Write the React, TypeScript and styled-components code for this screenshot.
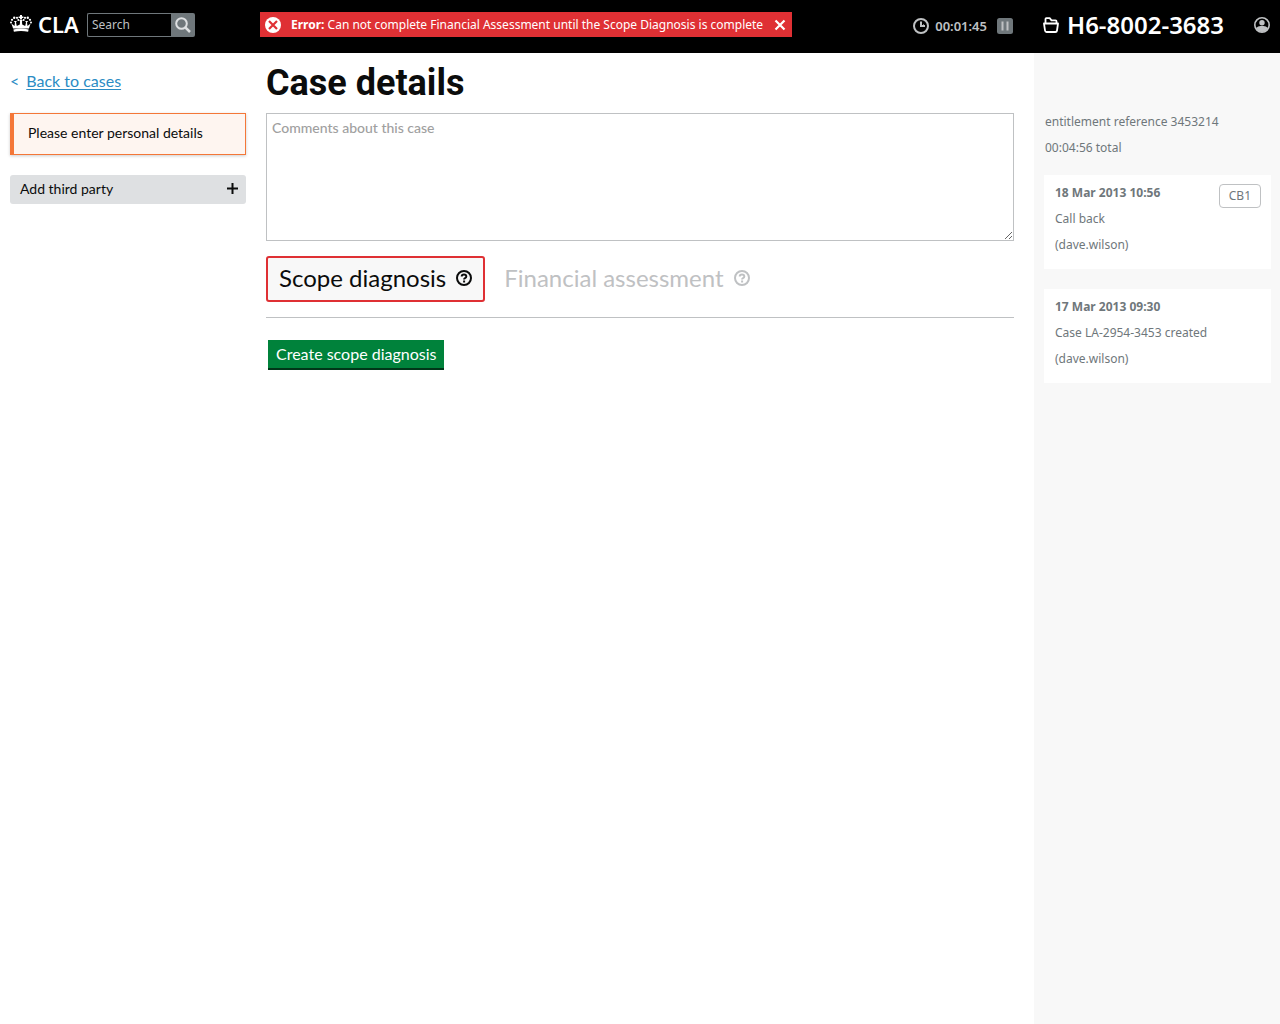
import React from "react";
import styled, { createGlobalStyle } from "styled-components";

const colors = {
  text: "#0b0c0c",
  muted: "#6f777b",
  border: "#bfc1c3",
  panel: "#f8f8f8",
  red: "#df3034",
  orange: "#f47738",
  link: "#2b8cc4",
  green: "#00823b",
};

const GlobalStyle = createGlobalStyle`
  *, *::before, *::after { box-sizing: border-box; }
  body {
    margin: 0;
    background: #fff;
    color: ${colors.text};
    font-family: Lato, "Liberation Sans", sans-serif;
    font-size: 14px;
    line-height: 20px;
  }
  h1, h2, p, ul { margin: 0; padding: 0; }
  button, input, textarea { font: inherit; }
  button { cursor: pointer; }
  svg { display: block; flex: none; }
`;

const Page = styled.div`
  min-height: 100vh;
  display: flex;
  flex-direction: column;
`;

const columns = "256px minmax(0, 1fr) 246px";

const Header = styled.header`
  display: grid;
  grid-template-columns: ${columns};
  height: 53px;
  padding-bottom: 4px;
  align-items: center;
  background: #000;
  color: #fff;
  font-family: "Noto Sans", "Open Sans", sans-serif;
`;

const Brand = styled.div`
  display: flex;
  align-items: center;
  padding-left: 10px;
`;

const Logo = styled.a`
  display: flex;
  align-items: center;
  gap: 6px;
  width: 77px;
  padding-bottom: 2px;
  color: #fff;
  font-size: 22px;
  font-weight: 600;
  line-height: 22px;
  text-decoration: none;
`;

const SearchForm = styled.form`
  display: flex;
  width: 108px;
  height: 24px;
`;

const SearchInput = styled.input`
  flex: 1;
  min-width: 0;
  padding: 0 4px;
  border: 1px solid ${colors.muted};
  border-right: 0;
  border-radius: 2px 0 0 2px;
  background: #000;
  color: #fff;
  font-size: 12px;
  &::placeholder { color: ${colors.border}; opacity: 1; }
`;

const SearchButton = styled.button`
  display: grid;
  place-items: center;
  width: 24px;
  padding: 0;
  border: 0;
  border-radius: 0 2px 2px 0;
  background: ${colors.muted};
  color: #dee0e2;
`;

const HeaderMain = styled.div`
  display: flex;
  align-items: center;
  justify-content: space-between;
  padding: 0 21px 0 4px;
`;

const IconButton = styled.button`
  display: grid;
  place-items: center;
  padding: 0;
  border: 0;
  background: none;
  color: inherit;
`;

const ErrorNotice = styled.div`
  display: flex;
  align-items: center;
  height: 25px;
  gap: 10px;
  padding: 0 5px;
  background: ${colors.red};
  font-size: 12px;
  white-space: nowrap;
  ${IconButton} { padding: 0 1px; }
`;

const Timer = styled.div`
  display: flex;
  align-items: center;
  gap: 6px;
  padding-top: 2px;
  color: ${colors.border};
  font-size: 13px;
  font-weight: 600;
  ${IconButton} { margin-left: 4px; }
`;

const CaseBar = styled.div`
  display: flex;
  align-items: center;
  justify-content: space-between;
  padding: 0 10px 0 9px;
`;

const CaseReference = styled.div`
  display: flex;
  align-items: center;
  gap: 8px;
  font-size: 24px;
  font-weight: 600;
  line-height: 24px;
  white-space: nowrap;
`;

const Body = styled.div`
  flex: 1;
  display: grid;
  grid-template-columns: ${columns};
`;

const Sidebar = styled.nav`
  display: flex;
  flex-direction: column;
  padding: 18px 10px;
`;

const BackRow = styled.div`
  display: flex;
  gap: 7px;
  margin-bottom: 22px;
  color: ${colors.link};
  font-size: 16px;
`;

const BackLink = styled.a`
  color: ${colors.link};
  text-decoration: underline;
  text-underline-offset: 2px;
`;

const PersonalDetails = styled.button`
  height: 42px;
  margin-bottom: 20px;
  padding: 0 14px 2px;
  border: 1px solid ${colors.orange};
  border-left-width: 4px;
  background: #fef5f0;
  box-shadow: 0 1px 3px rgba(0, 0, 0, 0.2);
  color: ${colors.text};
  text-align: left;
`;

const ThirdParty = styled.button`
  display: flex;
  align-items: center;
  justify-content: space-between;
  height: 29px;
  padding: 0 8px 2px 10px;
  border: 0;
  border-radius: 3px;
  background: #dee0e2;
  color: ${colors.text};
`;

const Main = styled.main`
  padding: 10px 20px 10px 10px;
`;

const Title = styled.h1`
  margin-bottom: 10px;
  font-family: Roboto, "Liberation Sans", sans-serif;
  font-size: 36px;
  font-weight: 700;
  line-height: 40px;
`;

const Comments = styled.textarea`
  display: block;
  width: 100%;
  height: 128px;
  padding: 4px 5px;
  border: 1px solid ${colors.border};
  border-radius: 0;
  font-size: 14px;
  line-height: 20px;
  resize: vertical;
  &::placeholder { color: #a0a0a0; opacity: 1; font-weight: 500; }
`;

const Tabs = styled.div`
  display: flex;
  gap: 6px;
  padding: 15px 0;
  border-bottom: 1px solid ${colors.border};
`;

const Tab = styled.button<{ $active?: boolean }>`
  display: flex;
  align-items: center;
  gap: 10px;
  height: 46px;
  padding: 0 11px 2px;
  border: 2px solid ${(p) => (p.$active ? colors.red : "transparent")};
  border-radius: 3px;
  background: ${(p) => (p.$active ? colors.panel : "transparent")};
  color: ${(p) => (p.$active ? colors.text : colors.border)};
  font-size: 24px;
  white-space: nowrap;
`;

const CreateButton = styled.button`
  height: 30px;
  margin: 22px 2px;
  padding: 0 8px 2px;
  border: 0;
  background: ${colors.green};
  box-shadow: inset 0 -2px 0 #003618;
  color: #fff;
  font-size: 16px;
`;

const Aside = styled.aside`
  padding: 56px 9px 0 10px;
  background: ${colors.panel};
  color: ${colors.muted};
  font-family: "Noto Sans", "Open Sans", sans-serif;
  font-size: 12px;
  line-height: 26px;
`;

const Summary = styled.div`
  padding-left: 1px;
  margin-bottom: 14px;
`;

const LogList = styled.ul`
  display: grid;
  gap: 20px;
  list-style: none;
`;

const LogEntry = styled.li`
  display: flex;
  justify-content: space-between;
  align-items: flex-start;
  padding: 5px 10px 11px 11px;
  background: #fff;
`;

const LogDate = styled.h2`
  font-size: 12px;
  font-weight: 700;
  line-height: 26px;
`;

const Code = styled.span`
  margin-top: 4px;
  padding: 0 9px;
  border: 1px solid ${colors.border};
  border-radius: 4px;
  line-height: 22px;
`;

const CrownIcon = () => (
  <svg width="22" height="18" viewBox="0 0 22 18" fill="currentColor" aria-hidden="true">
    <path d="M10 0h2v1.400h1.400v1.600H12v1.500h-2V3H8.600V1.400H10z" />
    <circle cx="4.200" cy="2.800" r="1.200" />
    <circle cx="7" cy="2.800" r="1.100" />
    <circle cx="15" cy="2.800" r="1.100" />
    <circle cx="17.800" cy="2.800" r="1.200" />
    <circle cx="2" cy="4.800" r="1.100" />
    <circle cx="20" cy="4.800" r="1.100" />
    <circle cx="1" cy="7.500" r="1" />
    <circle cx="21" cy="7.500" r="1" />
    <circle cx="8.300" cy="5" r="1" />
    <circle cx="13.700" cy="5" r="1" />
    <path d="M1.400 8.500 4.500 11 5 7.500 3.800 6h3L6 7.600l.8 3.300 3-1.500L10 6.500 9.300 5h3.400L12 6.500l.2 2.900 3 1.500.8-3.300L15.200 6h3L17 7.500l.5 3.500 3.100-2.500-1.700 5.100-15.800 0z" />
    <path d="M3.400 14.500q7.600-1.900 15.200 0l-.5 2.300q-7.100-1.600-14.200 0z" />
  </svg>
);

const SearchIcon = () => (
  <svg width="16" height="16" viewBox="0 0 16 16" fill="none" stroke="currentColor" strokeWidth="2" aria-hidden="true">
    <circle cx="6.500" cy="6.500" r="5.300" />
    <path d="m10.300 10.300 4.700 4.700" strokeWidth="2.500" />
  </svg>
);

const ErrorIcon = () => (
  <svg width="16" height="16" viewBox="0 0 16 16" aria-hidden="true">
    <circle cx="8" cy="8" r="8" fill="#fff" />
    <path d="m4 4 8 8m0-8-8 8" stroke={colors.red} strokeWidth="2.200" />
  </svg>
);

const CloseIcon = () => (
  <svg width="12" height="12" viewBox="0 0 12 12" aria-hidden="true">
    <path d="m1.500 1.500 9 9m0-9-9 9" stroke="currentColor" strokeWidth="2.200" />
  </svg>
);

const ClockIcon = () => (
  <svg width="16" height="16" viewBox="0 0 16 16" fill="none" stroke="currentColor" strokeWidth="2" aria-hidden="true">
    <circle cx="8" cy="8" r="7" />
    <path d="M8 3.500V8h4" />
    <path d="m8.500 8.500 2.500-2" strokeWidth="1" />
  </svg>
);

const PauseIcon = () => (
  <svg width="16" height="16" viewBox="0 0 16 16" aria-hidden="true">
    <rect width="16" height="16" rx="2.500" fill={colors.muted} />
    <path d="M5.500 3.500v9M10.500 3.500v9" stroke="currentColor" strokeWidth="2" />
  </svg>
);

const FolderIcon = () => (
  <svg width="16" height="16" viewBox="0 0 16 16" fill="none" stroke="currentColor" strokeWidth="1.800" strokeLinejoin="round" aria-hidden="true">
    <path d="M2.500 6.500V2Q2.500 1.200 3.300 1.200h3.400L8.500 3.300h4q1 0 1 1v2.200" />
    <path d="M1 6.500h14l-1 7q-.2 1.500-1.600 1.500H3.600Q2.200 15 2 13.500z" />
  </svg>
);

const UserIcon = () => (
  <svg width="16" height="16" viewBox="0 0 16 16" aria-hidden="true">
    <circle cx="8" cy="8" r="7.200" fill="none" stroke={colors.border} strokeWidth="1.600" />
    <circle cx="8" cy="5.700" r="2.700" fill={colors.border} />
    <path d="M2 11q2-2 4.500-2h3Q12 9 14 11q-2 4-6 4t-6-4z" fill={colors.border} />
  </svg>
);

const PlusIcon = () => (
  <svg width="11" height="11" viewBox="0 0 11 11" aria-hidden="true">
    <path d="M5.500 0v11M0 5.500h11" stroke="currentColor" strokeWidth="2" />
  </svg>
);

const HelpIcon = () => (
  <svg width="16" height="16" viewBox="0 0 16 16" fill="none" stroke="currentColor" strokeWidth="2" aria-hidden="true">
    <circle cx="8" cy="8" r="7" />
    <path d="M5.700 6.500Q5.700 4.500 8 4.500t2.300 1.900Q10.300 7.500 9 8.100 8.100 8.500 8.100 9.600" />
    <path d="M7.100 11.500h2" />
  </svg>
);

const logs = [
  { date: "18 Mar 2013 10:56", note: "Call back", user: "dave.wilson", code: "CB1" },
  { date: "17 Mar 2013 09:30", note: "Case LA-2954-3453 created", user: "dave.wilson" },
];

export default function App() {
  return (
    <>
      <GlobalStyle />
      <Page>
        <Header>
          <Brand>
            <Logo href="#">
              <CrownIcon />
              CLA
            </Logo>
            <SearchForm role="search">
              <SearchInput type="text" placeholder="Search" aria-label="Search" />
              <SearchButton type="submit" aria-label="Submit search">
                <SearchIcon />
              </SearchButton>
            </SearchForm>
          </Brand>
          <HeaderMain>
            <ErrorNotice role="alert">
              <ErrorIcon />
              <span>
                <strong>Error:</strong> Can not complete Financial Assessment until the Scope Diagnosis is complete
              </span>
              <IconButton type="button" aria-label="Dismiss">
                <CloseIcon />
              </IconButton>
            </ErrorNotice>
            <Timer>
              <ClockIcon />
              00:01:45
              <IconButton type="button" aria-label="Pause timer">
                <PauseIcon />
              </IconButton>
            </Timer>
          </HeaderMain>
          <CaseBar>
            <CaseReference>
              <FolderIcon />
              H6-8002-3683
            </CaseReference>
            <IconButton type="button" aria-label="Account">
              <UserIcon />
            </IconButton>
          </CaseBar>
        </Header>
        <Body>
          <Sidebar>
            <BackRow>
              <span>&lt;</span>
              <BackLink href="#">Back to cases</BackLink>
            </BackRow>
            <PersonalDetails type="button">Please enter personal details</PersonalDetails>
            <ThirdParty type="button">
              Add third party
              <PlusIcon />
            </ThirdParty>
          </Sidebar>
          <Main>
            <Title>Case details</Title>
            <Comments placeholder="Comments about this case" aria-label="Comments about this case" />
            <Tabs role="tablist">
              <Tab type="button" role="tab" aria-selected="true" $active>
                Scope diagnosis
                <HelpIcon />
              </Tab>
              <Tab type="button" role="tab" aria-selected="false">
                Financial assessment
                <HelpIcon />
              </Tab>
            </Tabs>
            <CreateButton type="button">Create scope diagnosis</CreateButton>
          </Main>
          <Aside>
            <Summary>
              <p>entitlement reference 3453214</p>
              <p>00:04:56 total</p>
            </Summary>
            <LogList>
              {logs.map((log) => (
                <LogEntry key={log.date}>
                  <div>
                    <LogDate>{log.date}</LogDate>
                    <p>{log.note}</p>
                    <p>({log.user})</p>
                  </div>
                  {log.code && <Code>{log.code}</Code>}
                </LogEntry>
              ))}
            </LogList>
          </Aside>
        </Body>
      </Page>
    </>
  );
}
